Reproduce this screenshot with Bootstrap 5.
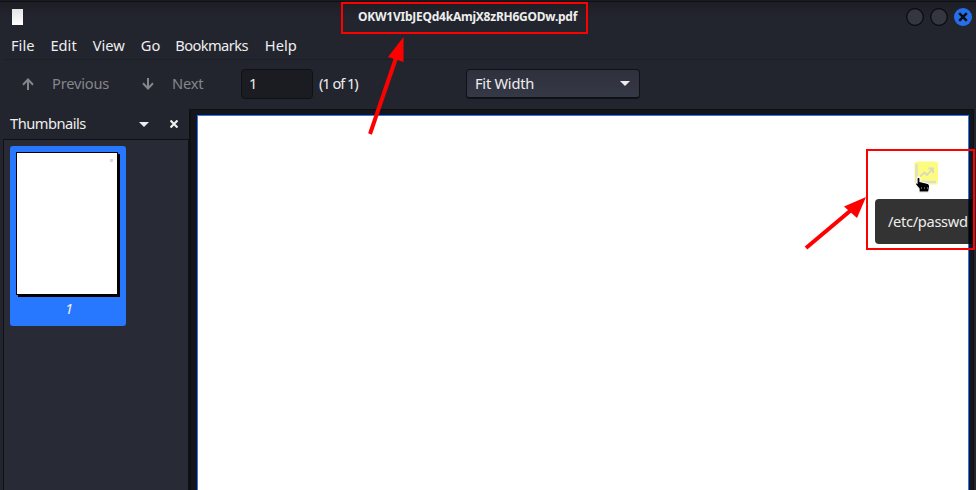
<!DOCTYPE html>
<html lang="en">
<head>
<meta charset="utf-8">
<meta name="viewport" content="width=device-width, initial-scale=1">
<title>OKW1VIbJEQd4kAmjX8zRH6GODw.pdf</title>
<link rel="stylesheet" href="https://cdn.jsdelivr.net/npm/bootstrap@5.3.0/dist/css/bootstrap.min.css">
<style>
body{width:976px;height:490px;background:#23252e;color:#eee;font:14.67px/20px "Noto Sans",sans-serif}
svg{display:block;flex:none}
.titlebar{height:32px;border-top:1px solid #191a20;background:linear-gradient(#1c1d24,#23252e 16px);box-shadow:inset 0 1px #101116}
.doc-icon{width:11px;height:16px;margin-left:12px;background:linear-gradient(#e4e4e4,#fff)}
.win-title{font-size:12px;font-weight:700;line-height:16px;letter-spacing:-.24px;margin-left:335px;width:220px;white-space:nowrap}
.win-btns{gap:6px;margin-right:4px}
.menus{height:27px;padding:0 0 2px 11px}
.menus a{color:#eee;text-decoration:none;margin-right:16px}
.menus .short{margin-right:15px}
.menus .long{letter-spacing:-.6px;margin-right:17px}
.tools{height:50px;margin:0 3px;padding-bottom:2px;border-top:1px solid #1e2028;color:#85868b}
.tools .prev,.tools .next,.tools .count{padding-bottom:2px}
.prev{width:81px;margin-left:15px;letter-spacing:-.2px}
.next-icon{margin-left:6px;margin-right:15px}
.next{width:32px;letter-spacing:-.2px}
.entry-box{width:72px;height:30px;margin-left:37px;background:#1b1c22;border:1px solid #101116;border-radius:4px;color:#eee;padding:0 8px 1px 7px;font-size:inherit;line-height:20px}
.count{width:39px;margin-left:6px;color:#eee;letter-spacing:-1.05px}
.zoom-box{width:174px;height:30px;margin-left:108px;background:linear-gradient(#2f323d,#353845);border:1px solid #101116;border-bottom-width:2px;border-radius:4px;color:#eee;padding:0 9px 0 8px}
.zoom-box span{letter-spacing:-.25px}
.side{width:189px}
.side-head{height:30px;padding-left:10px}
.side-label{letter-spacing:-.5px;padding-bottom:2px}
.side-close{margin:0 11px 0 21px}
.thumbs{margin-left:3px;border:1px solid #101116;border-width:1px 1px 0;background:#282a35;padding:6px}
.thumb{width:116px;height:180px;border-radius:3px;background:#2777ff;padding:6px}
.thumb-no{padding:3px 0 0 2px}
.sheet{width:102px;height:143px;background:#fff;border:1px solid #000;box-shadow:2px 2px #000}
.sheet i{width:3px;height:3px;background:#dcdccb;margin:6px 4px}
.viewer{margin-right:2px;background:#15161b;border:solid #0e0f13;border-width:1px 1px 0 2px;padding:5px 4px 0 6px}
.page{background:#fff;border:1px solid #2777ff;border-bottom:0}
.tip{left:875px;top:199px;width:99px;height:45px;border-radius:4px 0 0 4px;background:rgba(0,0,0,.8);padding:13px;line-height:19px;letter-spacing:-.33px;white-space:nowrap}
.overlay{left:0;top:0}
</style>
</head>
<body class="position-relative overflow-hidden d-flex flex-column">
<header class="titlebar d-flex align-items-center flex-shrink-0">
  <span class="doc-icon"></span>
  <span class="win-title">OKW1VIbJEQd4kAmjX8zRH6GODw.pdf</span>
  <div class="win-btns d-flex ms-auto">
    <svg width="18" height="18"><circle cx="9" cy="9" r="8.3" fill="#343742" stroke="#090a0d" stroke-width="1.2"/></svg>
    <svg width="18" height="18"><circle cx="9" cy="9" r="8.3" fill="#343742" stroke="#090a0d" stroke-width="1.2"/></svg>
    <svg width="18" height="18"><circle cx="9" cy="9" r="9" fill="#266fea"/><path d="M5.200 5.200l7.600 7.600M12.800 5.200l-7.600 7.600" stroke="#0c0d12" stroke-width="2.500"/></svg>
  </div>
</header>
<nav class="menus d-flex align-items-center flex-shrink-0">
  <a href="#">File</a><a href="#">Edit</a><a href="#">View</a><a href="#" class="short">Go</a><a href="#" class="long">Bookmarks</a><a href="#">Help</a>
</nav>
<div class="tools d-flex align-items-center flex-shrink-0">
  <svg class="ms-3" width="18" height="14"><path d="M9 13V3M4 7.700L9 2.500l5 5.200" fill="none" stroke="#85868b" stroke-width="2"/></svg>
  <span class="prev">Previous</span>
  <svg class="next-icon" width="18" height="14"><path d="M9 1v10M4 6.300l5 5.200 5-5.200" fill="none" stroke="#85868b" stroke-width="2"/></svg>
  <span class="next">Next</span>
  <input class="entry-box" value="1" aria-label="Page">
  <span class="count text-nowrap">(1 of 1)</span>
  <div class="zoom-box d-flex align-items-center justify-content-between"><span>Fit Width</span><svg width="10" height="5"><path d="M0 0h10L5 5z" fill="#eee"/></svg></div>
</div>
<main class="d-flex flex-grow-1">
  <aside class="side d-flex flex-column flex-shrink-0">
    <div class="side-head d-flex align-items-center">
      <span class="side-label">Thumbnails</span>
      <svg class="ms-auto" width="10" height="5"><path d="M0 0h10L5 5z" fill="#eee"/></svg>
      <svg class="side-close" width="8" height="8"><path d="M.5.5l7 7M7.500.5l-7 7" stroke="#eee" stroke-width="2.200"/></svg>
    </div>
    <div class="thumbs flex-grow-1">
      <div class="thumb">
        <div class="sheet d-flex justify-content-end"><i></i></div>
        <div class="text-center fst-italic thumb-no">1</div>
      </div>
    </div>
  </aside>
  <section class="viewer d-flex flex-grow-1"><div class="page flex-grow-1"></div></section>
</main>
<svg class="position-absolute overlay" width="976" height="490">
  <rect x="914.500" y="161.500" width="23.500" height="23" rx="3" fill="#fcfc80"/>
  <path d="M916.500 164v18H936" fill="none" stroke="#dedecb" stroke-width="2.400"/>
  <path d="M920 176.500l4.500-4 2.500 2.500 5.500-6M928.500 168.500h4.500v4.500" fill="none" stroke="#d8d8c4" stroke-width="1.800"/>
  <path d="M917 178q1.500-1.600 3 0v3.500l8 2q1.800.8 1.600 3.200l-.9 5.500h-9.700v-3.500l-3.300-3.800q-.4-2.900 1.300-1.900z" fill="#000" stroke="#fff" stroke-width="1.200"/>
  <path d="M921 188h1m2 0h1m2 0h1" stroke="#aaa"/>
</svg>
<div class="tip position-absolute">/etc/passwd</div>
<svg class="position-absolute overlay" width="976" height="490" fill="none" stroke="#f00">
  <rect x="342" y="3" width="245" height="30" stroke-width="2"/>
  <rect x="867" y="150" width="107" height="99" stroke-width="2"/>
  <path d="M370 134L396 58" stroke-width="4"/><path d="M403.500 37V62L388 57z" fill="#f00" stroke="none"/>
  <path d="M806 248L850 211" stroke-width="4"/><path d="M866 197L857 218 844 206.500z" fill="#f00" stroke="none"/>
</svg>
<script src="https://cdn.jsdelivr.net/npm/bootstrap@5.3.0/dist/js/bootstrap.bundle.min.js"></script>
</body>
</html>
